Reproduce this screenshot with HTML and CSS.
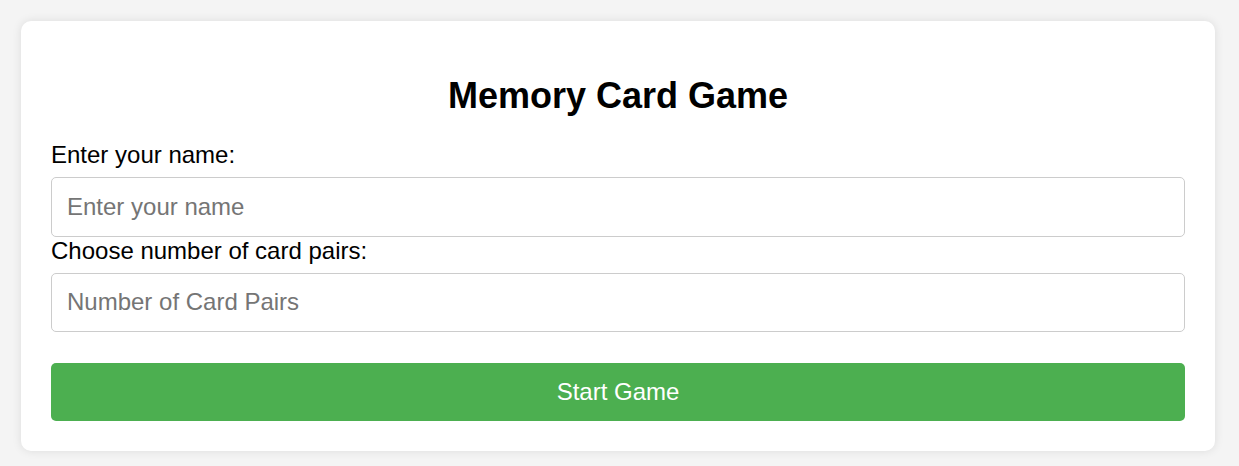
FILE: index.html
```html
<!DOCTYPE html>
<html lang="en">
<head>
<meta charset="utf-8">
<title>Memory Card Game</title>
<link rel="stylesheet" href="styles.css">
</head>
<body>
<div class="card">
  <h1 class="title">Memory Card Game</h1>
  <form class="form">
    <label class="label" for="name">Enter your name:</label>
    <input class="field" id="name" type="text" placeholder="Enter your name">
    <label class="label" for="pairs">Choose number of card pairs:</label>
    <input class="field" id="pairs" type="number" placeholder="Number of Card Pairs">
    <button class="start" type="button">Start Game</button>
  </form>
</div>
</body>
</html>
```
FILE: styles.css
```css
html, body {
  margin: 0;
  padding: 0;
}
body {
  background: #f4f4f4;
  font-family: "Liberation Sans", Arial, sans-serif;
  padding: 21px;
}
.card {
  width: 1194px;
  box-sizing: border-box;
  background: #fff;
  border-radius: 10px;
  box-shadow: 0 0 10px rgba(0, 0, 0, 0.1);
  padding: 30px;
}
.title {
  font-size: 36px;
  font-weight: bold;
  text-align: center;
  margin: 24px 0;
  color: #000;
}
.form {
  display: flex;
  flex-direction: column;
}
.label {
  display: block;
  font-size: 24px;
  margin-bottom: 8px;
  color: #000;
}
.field {
  display: block;
  width: 100%;
  box-sizing: border-box;
  font-family: "Liberation Sans", Arial, sans-serif;
  font-size: 24px;
  padding: 15px;
  border: 1px solid #ccc;
  border-radius: 5px;
  margin: 0;
  line-height: normal;
  height: 59.5px;
  outline: none;
}
.field::placeholder {
  color: #757575;
}
.field::-webkit-outer-spin-button,
.field::-webkit-inner-spin-button {
  -webkit-appearance: none;
  margin: 0;
}
.start {
  margin-top: 31px;
  width: 100%;
  height: 58px;
  background: #4caf50;
  color: #fff;
  font-family: "Liberation Sans", Arial, sans-serif;
  font-size: 24px;
  border: none;
  border-radius: 5px;
  padding: 15px;
  cursor: pointer;
}
```
